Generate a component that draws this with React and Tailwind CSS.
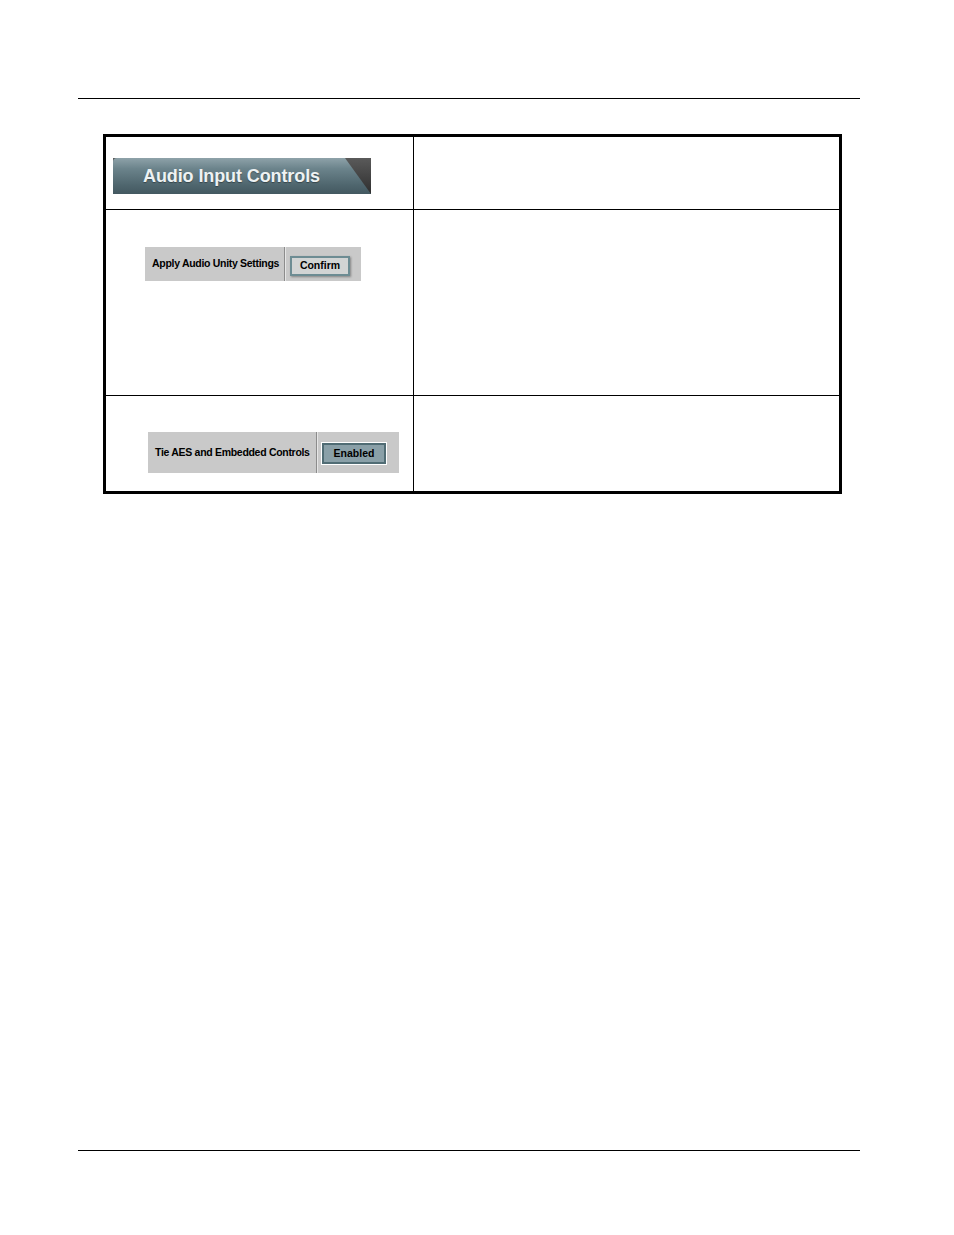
import React from "react";

const font = { fontFamily: '"Liberation Sans", Arial, sans-serif' };

const Row = ({ left, right, className }) => (
  <div className={`grid grid-cols-[308px_1fr] ${className}`}>
    <div className="border-r border-black">{left}</div>
    <div>{right}</div>
  </div>
);

const HeaderTab = () => (
  <div className="relative w-[258px] h-[36px] bg-[linear-gradient(#5a5a5a,#2e2e2e)]">
    <div className="absolute inset-0 [clip-path:polygon(0_0,232px_0,258px_100%,0_100%)] rounded-tl-[4px] bg-[linear-gradient(#8ea2a9_0%,#6b838b_30%,#4f666e_75%,#435860_100%)] flex items-center pl-[30px]">
      <span className="text-[18px] font-bold text-[#eef2f3] tracking-[-0.1px] [text-shadow:0_1px_1px_rgba(0,0,0,0.35)]">
        Audio Input Controls
      </span>
    </div>
  </div>
);

const Widget = ({ label, button, active, labelW, btnW, h, btnH, cellW, btnTop }) => (
  <div className={`flex bg-[#c9c9c9] ${h}`}>
    <div className={`${labelW} flex items-center pl-[7px] text-[10.5px] font-bold text-black tracking-[-0.3px]`}>
      {label}
    </div>
    <div className="w-px bg-[#8c8c8c]" />
    <div className="w-px bg-[#e6e6e6]" />
    <div className={`${cellW} ${btnTop} pl-[4px]`}>
      {active ? (
        <div className={`${btnW} ${btnH} border-2 border-[#506c74] bg-[#8aa0a8] outline outline-1 outline-white flex items-center justify-center text-[10.5px] font-bold text-black`}>
          {button}
        </div>
      ) : (
        <div className={`${btnW} ${btnH} border-2 border-[#6d8c93] bg-[#d2d4d4] shadow-[1px_1px_2px_rgba(0,0,0,0.35)] flex items-center justify-center text-[10.5px] font-bold text-black`}>
          {button}
        </div>
      )}
    </div>
  </div>
);

export default function App() {
  return (
    <div className="w-[954px] h-[1235px] bg-white flex flex-col" style={font}>
      <div className="mt-[98px] ml-[78px] w-[782px] h-px bg-black" />
      <div className="mt-[35px] ml-[103px] w-[739px] border-[3px] border-black">
        <Row
          className="h-[73px] border-b border-black"
          left={
            <div className="pt-[21px] pl-[7px]">
              <HeaderTab />
            </div>
          }
          right={null}
        />
        <Row
          className="h-[186px] border-b border-black"
          left={
            <div className="pt-[37px] pl-[39px]">
              <div className="w-[216px]">
                <Widget
                  label="Apply Audio Unity Settings"
                  button="Confirm"
                  labelW="w-[139px]"
                  cellW="w-[75px]"
                  btnW="w-[60px]"
                  btnH="h-[20px]"
                  btnTop="pt-[9px]"
                  h="h-[34px]"
                />
              </div>
            </div>
          }
          right={null}
        />
        <Row
          className="h-[95px]"
          left={
            <div className="pt-[36px] pl-[42px]">
              <div className="w-[251px]">
                <Widget
                  label="Tie AES and Embedded Controls"
                  button="Enabled"
                  active
                  labelW="w-[168px]"
                  cellW="w-[81px]"
                  btnW="w-[64px]"
                  btnH="h-[21px]"
                  btnTop="pt-[11px]"
                  h="h-[41px]"
                />
              </div>
            </div>
          }
          right={null}
        />
      </div>
      <div className="mt-[656px] ml-[78px] w-[782px] h-px bg-black" />
    </div>
  );
}
